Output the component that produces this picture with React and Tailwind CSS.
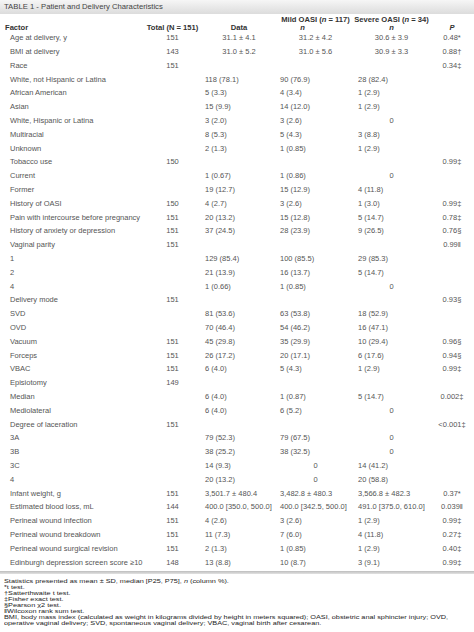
const rows = [
  { l: "Age at delivery, y", t: "151", d: "31.1 ± 4.1", m: "31.2 ± 4.2", s: "30.6 ± 3.9", p: "0.48*", c: true },
  { l: "BMI at delivery", t: "143", d: "31.0 ± 5.2", m: "31.0 ± 5.6", s: "30.9 ± 3.3", p: "0.88†", c: true },
  { l: "Race", t: "151", p: "0.34‡" },
  { l: "White, not Hispanic or Latina", d: "118 (78.1)", m: "90 (76.9)", s: "28 (82.4)" },
  { l: "African American", d: "5 (3.3)", m: "4 (3.4)", s: "1 (2.9)" },
  { l: "Asian", d: "15 (9.9)", m: "14 (12.0)", s: "1 (2.9)" },
  { l: "White, Hispanic or Latina", d: "3 (2.0)", m: "3 (2.6)", s: "0" },
  { l: "Multiracial", d: "8 (5.3)", m: "5 (4.3)", s: "3 (8.8)" },
  { l: "Unknown", d: "2 (1.3)", m: "1 (0.85)", s: "1 (2.9)" },
  { l: "Tobacco use", t: "150", p: "0.99‡" },
  { l: "Current", d: "1 (0.67)", m: "1 (0.86)", s: "0" },
  { l: "Former", d: "19 (12.7)", m: "15 (12.9)", s: "4 (11.8)" },
  { l: "History of OASI", t: "150", d: "4 (2.7)", m: "3 (2.6)", s: "1 (3.0)", p: "0.99‡" },
  { l: "Pain with intercourse before pregnancy", t: "151", d: "20 (13.2)", m: "15 (12.8)", s: "5 (14.7)", p: "0.78‡" },
  { l: "History of anxiety or depression", t: "151", d: "37 (24.5)", m: "28 (23.9)", s: "9 (26.5)", p: "0.76§" },
  { l: "Vaginal parity", t: "151", p: "0.99‖" },
  { l: "1", d: "129 (85.4)", m: "100 (85.5)", s: "29 (85.3)" },
  { l: "2", d: "21 (13.9)", m: "16 (13.7)", s: "5 (14.7)" },
  { l: "4", d: "1 (0.66)", m: "1 (0.85)", s: "0" },
  { l: "Delivery mode", t: "151", p: "0.93§" },
  { l: "SVD", d: "81 (53.6)", m: "63 (53.8)", s: "18 (52.9)" },
  { l: "OVD", d: "70 (46.4)", m: "54 (46.2)", s: "16 (47.1)" },
  { l: "Vacuum", t: "151", d: "45 (29.8)", m: "35 (29.9)", s: "10 (29.4)", p: "0.96§" },
  { l: "Forceps", t: "151", d: "26 (17.2)", m: "20 (17.1)", s: "6 (17.6)", p: "0.94§" },
  { l: "VBAC", t: "151", d: "6 (4.0)", m: "5 (4.3)", s: "1 (2.9)", p: "0.99‡" },
  { l: "Episiotomy", t: "149" },
  { l: "Median", d: "6 (4.0)", m: "1 (0.87)", s: "5 (14.7)", p: "0.002‡" },
  { l: "Mediolateral", d: "6 (4.0)", m: "6 (5.2)", s: "0" },
  { l: "Degree of laceration", t: "151", p: "<0.001‡" },
  { l: "3A", d: "79 (52.3)", m: "79 (67.5)", s: "0" },
  { l: "3B", d: "38 (25.2)", m: "38 (32.5)", s: "0" },
  { l: "3C", d: "14 (9.3)", m: "0", s: "14 (41.2)" },
  { l: "4", d: "20 (13.2)", m: "0", s: "20 (58.8)" },
  { l: "Infant weight, g", t: "151", d: "3,501.7 ± 480.4", m: "3,482.8 ± 480.3", s: "3,566.8 ± 482.3", p: "0.37*" },
  { l: "Estimated blood loss, mL", t: "144", d: "400.0 [350.0, 500.0]", m: "400.0 [342.5, 500.0]", s: "491.0 [375.0, 610.0]", p: "0.039‖" },
  { l: "Perineal wound infection", t: "151", d: "4 (2.6)", m: "3 (2.6)", s: "1 (2.9)", p: "0.99‡" },
  { l: "Perineal wound breakdown", t: "151", d: "11 (7.3)", m: "7 (6.0)", s: "4 (11.8)", p: "0.27‡" },
  { l: "Perineal wound surgical revision", t: "151", d: "2 (1.3)", m: "1 (0.85)", s: "1 (2.9)", p: "0.40‡" },
  { l: "Edinburgh depression screen score ≥10", t: "148", d: "13 (8.8)", m: "10 (8.7)", s: "3 (9.1)", p: "0.99‡" },
];

const cols = "grid grid-cols-[145px_55px_78px_75px_77px_44px]";

function Val({ v, center, pad }) {
  if (!v) return <div />;
  if (center || v === "0") {
    return <div className="text-center whitespace-nowrap">{v}</div>;
  }
  return <div className={`whitespace-nowrap ${pad}`}>{v}</div>;
}

export default function App() {
  return (
    <div className="w-[474px] h-[632px] bg-white overflow-hidden font-['Liberation_Sans',Arial,sans-serif] text-[#555]">
      <div className="h-[14px] bg-gradient-to-b from-[#f6f6f6] to-[#dcdcdc] pl-[4px] text-[7.7px] leading-[14px] text-[#444]">
        TABLE 1 - Patient and Delivery Characteristics
      </div>

      <div className={`${cols} h-[17px] pt-[2px] text-[7.6px] leading-[7.6px] font-bold text-[#333]`}>
        <div className="self-end pl-[5px]">Factor</div>
        <div className="self-end text-center whitespace-nowrap">Total (N = 151)</div>
        <div className="self-end text-center">Data</div>
        <div className="text-center whitespace-nowrap">
          <div>Mild OASI (<i>n</i> = 117)</div>
          <div className="pr-[26px]"><i>n</i></div>
        </div>
        <div className="text-center whitespace-nowrap">
          <div>Severe OASI (<i>n</i> = 34)</div>
          <div><i>n</i></div>
        </div>
        <div className="self-end text-center"><i>P</i></div>
      </div>

      <div className="text-[7.5px]">
        {rows.map((r, i) => (
          <div key={i} className={`${cols} h-[13.8px] items-center`}>
            <div className="pl-[10px] whitespace-nowrap">{r.l}</div>
            <Val v={r.t} center />
            <Val v={r.d} center={r.c} pad="pl-[5px]" />
            <Val v={r.m} center={r.c} pad="pl-[2px]" />
            <Val v={r.s} center={r.c} pad="pl-[5px]" />
            <Val v={r.p} center />
          </div>
        ))}
      </div>

      <div className="mt-[2px] h-[3px] bg-gradient-to-b from-[#bdbdbd] to-[#e2e2e2]" />

      <div className="pt-[4px] pl-[4px]">
        <div className="w-[380px] origin-top-left scale-x-[1.215] text-[6px] leading-[6px] text-[#222]">
          <div>Statistics presented as mean ± SD, median [P25, P75], <i>n</i> (column %).</div>
          <div>*t test.</div>
          <div>†Satterthwaite t test.</div>
          <div>‡Fisher exact test.</div>
          <div>§Pearson χ2 test.</div>
          <div>‖Wilcoxon rank sum test.</div>
          <div>
            BMI, body mass index (calculated as weight in kilograms divided by height in meters squared); OASI, obstetric anal sphincter injury; OVD, operative vaginal delivery; SVD, spontaneous vaginal delivery; VBAC, vaginal birth after cesarean.
          </div>
        </div>
      </div>
    </div>
  );
}
